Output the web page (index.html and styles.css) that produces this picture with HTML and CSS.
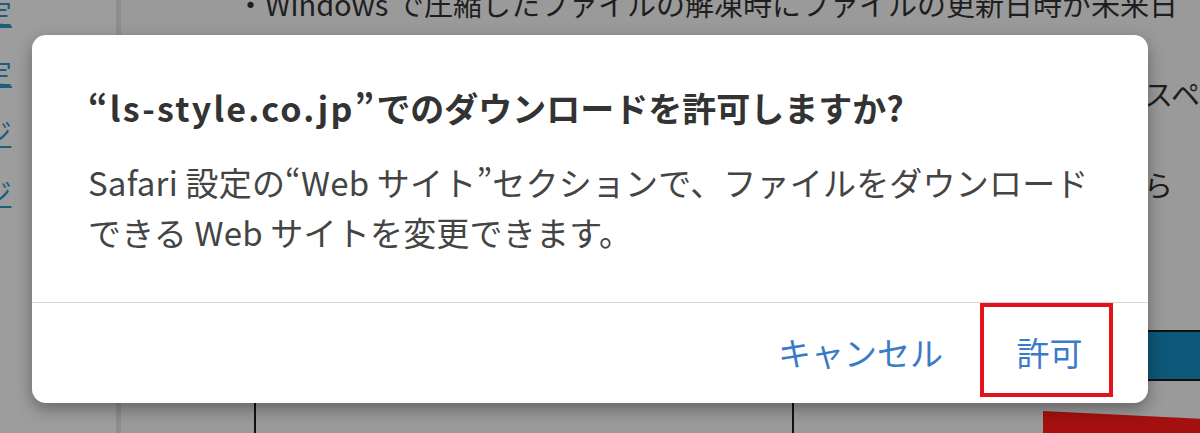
FILE: index.html
```html
<!DOCTYPE html>
<html lang="ja">
<head>
<meta charset="utf-8">
<title>ダウンロードの許可</title>
<link rel="stylesheet" href="styles.css">
</head>
<body>
<div class="page">
  <aside class="sidebar">
    <a class="side-link">設定</a>
    <a class="side-link">設定</a>
    <a class="side-link">ージ</a>
    <a class="side-link">ージ</a>
  </aside>
  <main class="main">
    <p class="line top-line">・Windows で圧縮したファイルの解凍時にファイルの更新日時が未来日</p>
    <p class="line frag frag-1">スペース</p>
    <p class="line frag frag-2">ら</p>
    <div class="blue-bar"></div>
    <div class="table">
      <div class="cell"></div>
      <div class="cell cell-last"><div class="red-banner"></div></div>
    </div>
  </main>

  <div class="dialog">
    <div class="dialog-body">
      <h1 class="dialog-title"><span class="latin">“ls-style.co.jp”</span>でのダウンロードを許可しますか?</h1>
      <p class="dialog-text">Safari 設定の“Web サイト”セクションで、ファイルをダウンロード<br>できる Web サイトを変更できます。</p>
    </div>
    <div class="dialog-actions">
      <button class="btn btn-cancel">キャンセル</button>
      <button class="btn btn-allow">許可</button>
    </div>
  </div>
</div>
</body>
</html>
```
FILE: styles.css
```css
html, body {
  margin: 0;
  padding: 0;
}
body {
  width: 1200px;
  height: 433px;
  overflow: hidden;
  background: #9a9a9a;
  font-family: "Noto Sans CJK JP", "Noto Sans", sans-serif;
}
.page {
  position: relative;
  display: grid;
  grid-template-columns: 121px 1fr;
  height: 433px;
  overflow: hidden;
}
.sidebar {
  background: #9d9d9d;
  border-right: 5px solid #8d8d8d;
  display: flex;
  flex-direction: column;
  overflow: hidden;
}
.side-link {
  display: block;
  margin-left: -44px;
  height: 60px;
  margin-top: -3px;
  margin-bottom: 3px;
  font-size: 28px;
  line-height: 30px;
  color: #1c5d78;
  text-decoration: underline;
  text-underline-offset: 2px;
  white-space: nowrap;
}
.main {
  overflow: hidden;
  display: flex;
  flex-direction: column;
}
.line {
  margin: 0;
  font-size: 29px;
  line-height: 36px;
  white-space: nowrap;
  color: #1e1e1e;
}
.top-line {
  margin-top: -15px;
  padding-left: 115px;
}
.frag {
  padding-left: 1023px;
}
.frag-1 {
  margin-top: 54px;
}
.frag-2 {
  margin-top: 55px;
}
.blue-bar {
  margin-top: 128px;
  margin-left: auto;
  width: 200px;
  height: 47px;
  background: #0d5878;
  border-top: 2px solid #111;
  border-bottom: 2px solid #111;
}
.table {
  margin-top: 6px;
  margin-left: 133px;
  display: grid;
  grid-template-columns: 538px 1fr;
  flex: 1;
}
.cell {
  border-left: 2px solid #111;
}
.cell-last {
  display: flex;
  justify-content: flex-end;
  align-items: flex-end;
}
.red-banner {
  width: 157px;
  height: 22px;
  background: #a3100f;
  clip-path: polygon(0 0, 100% 35%, 100% 100%, 0 100%);
}

/* Dialog overlay */
.dialog {
  position: absolute;
  left: 32px;
  top: 35px;
  width: 1116px;
  height: 368px;
  background: #ffffff;
  border-radius: 14px;
  box-shadow: 0 6px 16px rgba(0, 0, 0, 0.35);
  display: flex;
  flex-direction: column;
  overflow: hidden;
}
.dialog-body {
  padding: 51px 30px 0 56px;
  height: 268px;
  box-sizing: border-box;
  border-bottom: 1px solid #d6d6d6;
}
.dialog-title {
  margin: 0;
  font-size: 34px;
  line-height: 44px;
  font-weight: 700;
  color: #333333;
  white-space: nowrap;
}
.latin {
  letter-spacing: 2.2px;
}
.dialog-text {
  margin: 27px 0 0;
  font-size: 33px;
  line-height: 50px;
  font-weight: 400;
  color: #444444;
  white-space: nowrap;
  letter-spacing: 0.2px;
}
.dialog-actions {
  display: flex;
  justify-content: flex-end;
  align-items: flex-start;
  gap: 37px;
  padding-right: 35px;
}
.btn {
  font-family: inherit;
  font-size: 33px;
  line-height: 40px;
  color: #3a7bc8;
  background: none;
  border: none;
  padding: 0;
  cursor: pointer;
}
.btn-cancel {
  height: 94px;
  padding-top: 4px;
}
.btn-allow {
  width: 133px;
  height: 94px;
  box-sizing: border-box;
  border: 4px solid #e3121b;
  display: flex;
  align-items: center;
  justify-content: center;
  padding-left: 6px;
  padding-top: 4px;
}
```
